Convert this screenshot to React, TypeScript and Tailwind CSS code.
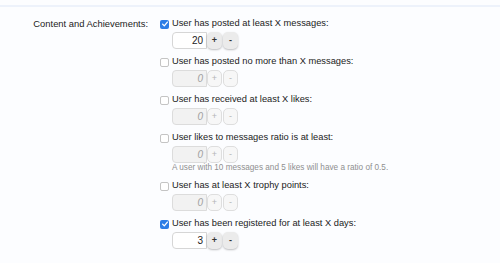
import React from "react";

type Row = {
  label: string;
  checked: boolean;
  value: string;
  hint?: string;
};

const rows: Row[] = [
  { label: "User has posted at least X messages:", checked: true, value: "20" },
  { label: "User has posted no more than X messages:", checked: false, value: "0" },
  { label: "User has received at least X likes:", checked: false, value: "0" },
  {
    label: "User likes to messages ratio is at least:",
    checked: false,
    value: "0",
    hint: "A user with 10 messages and 5 likes will have a ratio of 0.5.",
  },
  { label: "User has at least X trophy points:", checked: false, value: "0" },
  { label: "User has been registered for at least X days:", checked: true, value: "3" },
];

function Check({ on }: { on: boolean }) {
  if (on)
    return (
      <span className="flex h-[9px] w-[9px] items-center justify-center rounded-[2px] bg-[#2b7de6]">
        <svg viewBox="0 0 10 10" className="h-[8px] w-[8px]">
          <path d="M2 5.2 L4.1 7.3 L8 2.6" fill="none" stroke="#fff" strokeWidth="1.6" strokeLinecap="round" strokeLinejoin="round" />
        </svg>
      </span>
    );
  return <span className="h-[9px] w-[9px] rounded-[2px] border border-[#c4c4c4] bg-white" />;
}

function Spinner({ value, on }: { value: string; on: boolean }) {
  return (
    <div className="flex h-[17px] items-stretch">
      <div
        className={
          on
            ? "flex w-[35px] items-center justify-end rounded-l-[4px] border border-[#d6d6d6] bg-white pr-[3px] text-[10px] text-[#222]"
            : "flex w-[35px] items-center justify-end rounded-l-[4px] border border-[#dcdcdc] bg-[#f2f2f2] pr-[3px] text-[10px] italic text-[#a0a0a0]"
        }
      >
        {value}
      </div>
      <span
        className={
          on
            ? "flex w-[15px] items-center justify-center rounded-[5px] bg-[#ebebeb] text-[9px] font-bold text-[#333] shadow-[0_1px_2px_rgba(0,0,0,0.25)]"
            : "flex w-[15px] items-center justify-center rounded-[5px] border border-[#dedede] bg-[#f7f7f7] text-[9px] text-[#b5b5b5]"
        }
      >
        +
      </span>
      <span
        className={
          on
            ? "ml-[1px] flex w-[15px] items-center justify-center rounded-[5px] bg-[#ebebeb] text-[9px] font-bold text-[#333] shadow-[0_1px_2px_rgba(0,0,0,0.25)]"
            : "ml-[1px] flex w-[15px] items-center justify-center rounded-[5px] border border-[#dedede] bg-[#f7f7f7] text-[9px] text-[#b5b5b5]"
        }
      >
        -
      </span>
    </div>
  );
}

export default function App() {
  return (
    <div className="h-[263px] w-[500px] overflow-hidden bg-[#fcfdff] font-['Liberation_Sans',Arial,sans-serif]">
      <div className="h-[5px]" />
      <div className="h-[2px] bg-[#edf2fb]" />
      <div className="flex pt-[10px]">
        <div className="flex h-[14px] w-[148px] items-center justify-end text-[9.4px] text-[#222]">
          Content and Achievements:
        </div>
        <div className="ml-[12px] flex flex-col">
          {rows.map((r) => (
            <div key={r.label} className="mb-[6px] flex flex-col">
              <div className="flex h-[14px] items-center gap-[3px] text-[9.3px] text-[#222]">
                <Check on={r.checked} />
                <span>{r.label}</span>
              </div>
              <div className="mt-[1px] pl-[12px]">
                <Spinner value={r.value} on={r.checked} />
              </div>
              {r.hint && (
                <div className="flex h-[10px] items-center pl-[12px] text-[8.2px] text-[#8f8f8f]">{r.hint}</div>
              )}
            </div>
          ))}
        </div>
      </div>
    </div>
  );
}
